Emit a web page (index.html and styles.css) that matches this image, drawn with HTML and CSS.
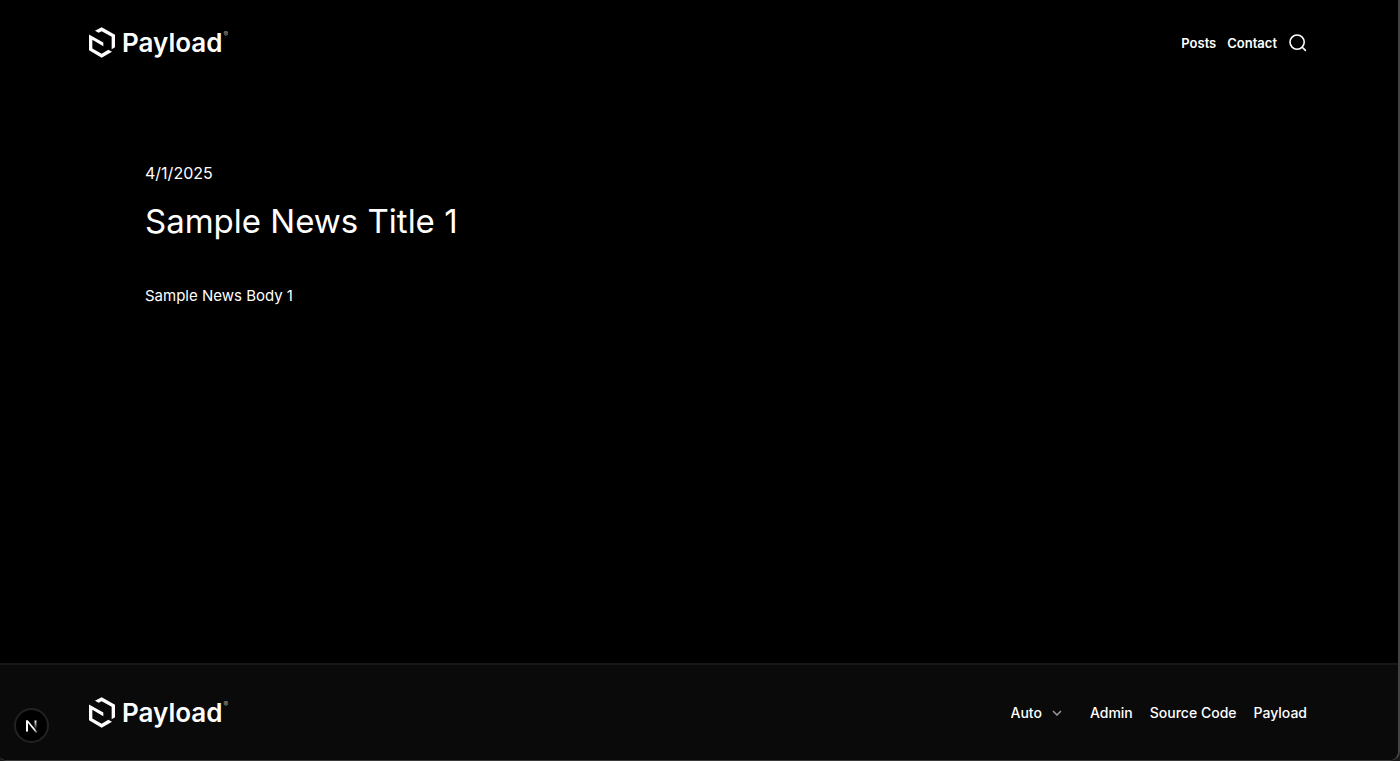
FILE: index.html
```html
<!DOCTYPE html>
<html lang="en">
<head>
<meta charset="utf-8">
<meta name="viewport" content="width=device-width, initial-scale=1">
<title>Sample News Title 1</title>
<link rel="stylesheet" href="styles.css">
</head>
<body>
<svg width="0" height="0" class="sprite" aria-hidden="true">
  <symbol id="mark" viewBox="0 0 78 92">
    <path d="M18 11 38 0 78 23V60L68 66V29L38 12 29 17Z"/>
    <path d="M0 22 43 46V57L10 38V64L38 80 58 68 69 74 38 92 0 69Z"/>
  </symbol>
</svg>
<div class="page">
  <header class="container header">
    <a class="logo" href="#"><svg class="mark" aria-hidden="true"><use href="#mark"/></svg><span class="word">Payload</span><span class="reg">®</span></a>
    <nav class="nav">
      <a href="#">Posts</a>
      <a href="#">Contact</a>
      <a class="search" href="#" aria-label="Search"><svg viewBox="0 0 24 24" aria-hidden="true"><circle cx="11.500" cy="11.500" r="9"/><path d="m22 22-4-4"/></svg></a>
    </nav>
  </header>
  <main class="article">
    <p class="date">4/1/2025</p>
    <h1 class="title">Sample News Title 1</h1>
    <p class="text">Sample News Body 1</p>
  </main>
  <footer class="footer">
    <div class="container footer-row">
      <a class="logo" href="#"><svg class="mark" aria-hidden="true"><use href="#mark"/></svg><span class="word">Payload</span><span class="reg">®</span></a>
      <div class="footer-nav">
        <div class="theme">
          <select class="theme-select" aria-label="Theme"><option>Auto</option><option>Light</option><option>Dark</option></select>
          <svg class="chevron" viewBox="0 0 10 6" aria-hidden="true"><path d="m1 1 4 4 4-4"/></svg>
        </div>
        <nav class="links">
          <a href="#">Admin</a>
          <a href="#">Source Code</a>
          <a href="#">Payload</a>
        </nav>
      </div>
    </div>
  </footer>
</div>
<button class="dev" type="button" aria-label="Open developer tools">
  <svg viewBox="0 0 14 14" aria-hidden="true">
    <defs>
      <linearGradient id="fade-stem" x1="0" y1="0" x2="0" y2="1"><stop offset="0" stop-color="#fff"/><stop offset="1" stop-color="#fff" stop-opacity="0"/></linearGradient>
      <linearGradient id="fade-diagonal" x1="0" y1="0" x2="1" y2="1"><stop offset=".7" stop-color="#fff"/><stop offset="1" stop-color="#fff" stop-opacity=".2"/></linearGradient>
    </defs>
    <path fill="#fff" d="M1 1.500h2v11H1z"/>
    <path fill="url(#fade-diagonal)" d="M1 1.500h2l9.500 11.500-1.500 1z"/>
    <path fill="url(#fade-stem)" d="M9.500 1.500h2v9h-2z"/>
  </svg>
</button>
</body>
</html>
```
FILE: styles.css
```css
* {
  box-sizing: border-box;
}

html {
  background: #191919;
}

body {
  margin: 0;
  color: #fff;
  font-family: Inter, "Liberation Sans", sans-serif;
  font-size: 15px;
  line-height: 24px;
}

a {
  color: inherit;
  text-decoration: none;
}

.sprite {
  position: absolute;
}

.page {
  display: flex;
  flex-direction: column;
  min-height: 100vh;
  background: #000;
  border-right: 2px solid #444;
  border-bottom: 1px solid #3a3a3a;
  border-radius: 0 0 10px 6px;
  overflow: hidden;
}

.container {
  display: flex;
  align-items: center;
  justify-content: space-between;
  width: 100%;
  padding: 0 91px 0 89px;
}

.header {
  height: 85px;
}

.logo {
  display: flex;
  align-items: center;
}

.mark {
  width: 26px;
  height: 31px;
  margin-right: 7px;
  fill: #fff;
}

.word {
  font-size: 26px;
  font-weight: 600;
  line-height: 32px;
}

.reg {
  align-self: flex-start;
  margin-left: 1px;
  color: #aaa;
  font-size: 7px;
  line-height: 16px;
}

.nav {
  display: flex;
  align-items: center;
  gap: 11px;
  font-size: 13px;
  font-weight: 600;
}

.search {
  display: flex;
}

.search svg {
  width: 19px;
  height: 19px;
  fill: none;
  stroke: #fff;
  stroke-width: 2;
  stroke-linecap: round;
}

.article {
  flex: 1;
  padding: 76px 145px 0;
}

.date,
.text {
  margin: 0;
}

.date {
  font-size: 16px;
}

.title {
  margin: 16px 0 43px;
  font-size: 33px;
  font-weight: 400;
  line-height: 40px;
}

.footer {
  background: #0a0a0a;
  border-top: 2px solid #161616;
}

.footer-row {
  height: 95px;
}

.footer-nav {
  display: flex;
  align-items: center;
  gap: 28px;
  font-size: 14px;
  font-weight: 500;
}

.theme {
  display: flex;
  align-items: center;
  gap: 10px;
}

.theme-select {
  appearance: none;
  field-sizing: content;
  padding: 0;
  border: 0;
  background: transparent;
  color: inherit;
  font: inherit;
}

.chevron {
  width: 10px;
  height: 6px;
  fill: none;
  stroke: #999;
  stroke-width: 1.5;
}

.links {
  display: flex;
  gap: 17px;
}

.dev {
  position: fixed;
  bottom: 18px;
  left: 14px;
  display: flex;
  align-items: center;
  justify-content: center;
  width: 35px;
  height: 35px;
  padding: 0;
  border: 2px solid #222;
  border-radius: 50%;
  background: #000;
}

.dev svg {
  width: 14px;
  height: 14px;
}
```
